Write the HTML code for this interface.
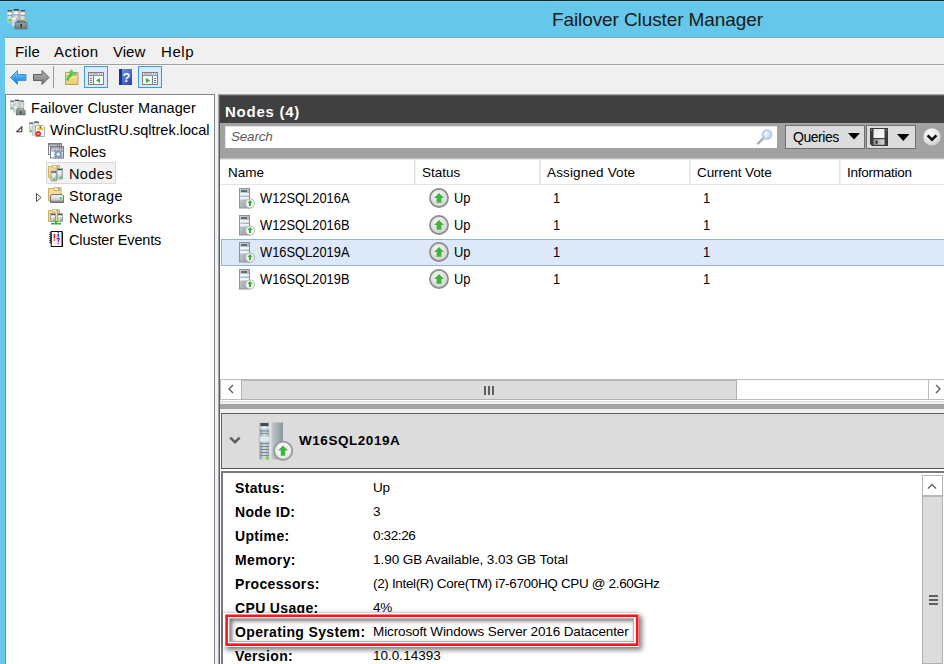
<!DOCTYPE html>
<html><head><meta charset="utf-8">
<style>
*{margin:0;padding:0;box-sizing:border-box}
html,body{width:944px;height:664px;overflow:hidden;background:#65c7e9;font-family:"Liberation Sans",sans-serif;color:#000}
.a{position:absolute}
svg{position:absolute;overflow:visible}
#topline{left:0;top:0;width:944px;height:1px;background:#2a2222;border-bottom:1px solid #64d2f4;height:2px}
#title{left:552px;top:9px;font-size:19px;color:#1a1a1a;white-space:nowrap;letter-spacing:-0.1px}
#client{left:5px;top:37px;width:939px;height:627px;background:#f0f0f0;border-top:1px solid #74a9c6}
#fr4{left:4px;top:37px;width:1px;height:627px;background:#60cdef}
#menuline{left:5px;top:64px;width:939px;height:1px;background:#a0a0a0}
#menuhl{left:5px;top:65px;width:939px;height:1px;background:#fafafc}
.menu{top:43px;font-size:15px;color:#000;white-space:nowrap}
#tree{left:5px;top:94px;width:210px;height:570px;background:#fff;border:1px solid #828790;border-bottom:none}
.t{font-size:14.5px;white-space:nowrap}
#rp{left:218px;top:94px;width:726px;height:570px;background:#5e5e5e;border-top:1px solid #a4a4a4;border-left:1px solid #a4a4a4}
#hdr{left:220px;top:96px;width:724px;height:27px;background:#404040}
#hdrtxt{left:225px;top:103px;font-size:15px;font-weight:bold;color:#fff;letter-spacing:0.75px}
#band{left:220px;top:123px;width:724px;height:37px;background:linear-gradient(#a2a2a2 0,#a2a2a2 35px,#d8d8d8 36px,#f4f4f4 37px)}
#search{left:225px;top:126px;width:552px;height:22px;background:#fff;border-top:1px solid #dfe3ec;border-left:1px solid #dfe3ec}
#stxt{left:231px;top:129px;font-size:13.5px;font-style:italic;color:#5c5c5c;letter-spacing:-0.2px}
.btn{top:125px;height:24px;background:#dcdcdc;border:1px solid #707070}
#list{left:220px;top:160px;width:724px;height:244px;background:#fff}
.ch{top:165px;font-size:13.5px;color:#000;white-space:nowrap}
.csep{top:160px;width:2px;height:24px;background:linear-gradient(90deg,#e0e0e0 0 1px,#efefef 1px 2px)}
.row{font-size:14px;white-space:nowrap;transform:scaleX(0.92);transform-origin:0 0}
#sel{left:221px;top:239px;width:730px;height:27px;background:#dde9f9;border:1px solid #8db2e3}
#hscroll{left:220px;top:379px;width:724px;height:21px;background:#fff;border-top:1px solid #bdbdbd;border-bottom:1px solid #bdbdbd}
#details{left:220px;top:413px;width:724px;height:251px;background:#fff}
#dhdr{left:221px;top:413px;width:723px;height:56px;background:#dcdcdc;border-top:1px solid #606060;border-left:1px solid #606060;border-bottom:1px solid #555}
#dcont{left:221px;top:471px;width:723px;height:193px;background:#fff;border-top:2px solid #767b86;border-left:2px solid #767b86}
.dl{left:235px;font-size:14px;font-weight:bold;white-space:nowrap;letter-spacing:0.35px}
.dv{left:373px;font-size:13.5px;white-space:nowrap;letter-spacing:-0.2px;margin-top:-1px}
</style></head><body>
<div class="a" id="topline"></div>
<div class="a" id="title">Failover Cluster Manager</div>
<!-- app icon -->
<svg style="left:7px;top:8px" width="21" height="22" viewBox="0 0 21 22">
 <defs><linearGradient id="tw" x1="0" y1="0" x2="1" y2="0"><stop offset="0" stop-color="#b8bec2"/><stop offset="0.5" stop-color="#e4e7e9"/><stop offset="1" stop-color="#a4abb0"/></linearGradient>
 <linearGradient id="tb" x1="0" y1="0" x2="0" y2="1"><stop offset="0" stop-color="#9aa3a8"/><stop offset="1" stop-color="#6d767b"/></linearGradient></defs>
 <rect x="0" y="2" width="5.5" height="12.5" fill="url(#tw)"/><rect x="0.5" y="2" width="4.5" height="1.5" fill="#44525a"/>
 <rect x="1.5" y="11" width="2.5" height="2.5" fill="#4ad23a"/>
 <rect x="5.8" y="1" width="7" height="12" fill="url(#tw)"/><rect x="6.5" y="1" width="5.5" height="1.6" fill="#2f3b42"/>
 <rect x="13" y="2" width="5.6" height="11" fill="url(#tw)"/><rect x="13.5" y="2" width="4.5" height="1.5" fill="#44525a"/>
 <rect x="8.5" y="10.5" width="2.5" height="2.5" fill="#b8e030"/><rect x="15.5" y="11" width="2.2" height="2" fill="#c8e040"/>
 <rect x="4.3" y="9.5" width="5.7" height="8.5" fill="url(#tw)"/><rect x="4.8" y="10" width="4.5" height="1.2" fill="#fff"/>
 <rect x="8" y="14.5" width="12" height="6.5" fill="url(#tb)" stroke="#5c646a" stroke-width="0.6"/>
 <path d="M10.5 14.5 V13 H17.5 V14.5" stroke="#4a555b" stroke-width="1" fill="none"/><rect x="0.5" y="5" width="4.5" height="1" fill="#fff"/><rect x="6.5" y="4.5" width="5.5" height="1" fill="#fff"/><rect x="13.5" y="5" width="4.5" height="1" fill="#fff"/><rect x="0.5" y="7" width="4.5" height="0.8" fill="#8a9398"/><rect x="6.5" y="6.5" width="5.5" height="0.8" fill="#8a9398"/><rect x="13.5" y="7" width="4.5" height="0.8" fill="#8a9398"/>
 <rect x="13.5" y="16" width="1.3" height="3.5" fill="#222"/>
</svg>
<div class="a" id="client"></div><div class="a" id="fr4"></div>
<div class="a menu" style="left:15px;letter-spacing:0.2px">File</div>
<div class="a menu" style="left:54px;letter-spacing:0.5px">Action</div>
<div class="a menu" style="left:113px">View</div>
<div class="a menu" style="left:161px;letter-spacing:0.6px">Help</div>
<div class="a" id="menuline"></div>
<div class="a" id="menuhl"></div>

<!-- toolbar -->
<svg style="left:10px;top:70px" width="17" height="15" viewBox="0 0 17 15">
 <defs><linearGradient id="gb" x1="0" y1="0" x2="0" y2="1"><stop offset="0" stop-color="#7fd0ff"/><stop offset="1" stop-color="#0a78d8"/></linearGradient></defs>
 <path d="M0.5 7.5 L7.5 0.5 L7.5 4.5 L16 4.5 L16 10.5 L7.5 10.5 L7.5 14.5 Z" fill="url(#gb)" stroke="#3f93d6" stroke-width="1"/>
</svg>
<svg style="left:33px;top:70px" width="17" height="15" viewBox="0 0 17 15">
 <defs><linearGradient id="gg" x1="0" y1="0" x2="0" y2="1"><stop offset="0" stop-color="#b8b8b8"/><stop offset="1" stop-color="#777"/></linearGradient></defs>
 <path d="M16 7.5 L9 0.5 L9 4.5 L0.5 4.5 L0.5 10.5 L9 10.5 L9 14.5 Z" fill="url(#gg)" stroke="#5e5e5e" stroke-width="1"/>
</svg>
<div class="a" style="left:53px;top:66px;width:1px;height:22px;background:#9a9a9a"></div>
<svg style="left:64px;top:69px" width="16" height="17" viewBox="0 0 16 17">
 <defs><linearGradient id="fo" x1="0" y1="0" x2="0" y2="1"><stop offset="0" stop-color="#fbe7a8"/><stop offset="1" stop-color="#ecca72"/></linearGradient></defs>
 <path d="M1.5 3.5 h12.5 v12 h-12.5 z" fill="url(#fo)" stroke="#c29f55"/>
 <path d="M1.5 6.5 h12.5" stroke="#dcb866" stroke-width="1"/>
 <ellipse cx="11.6" cy="4.7" rx="1.4" ry="0.7" fill="#4f8fe8"/>
 <path d="M3.6 10.4 C4.3 8.2 5.5 6.8 7.4 5.4" stroke="#3ccf3c" stroke-width="2.7" fill="none" stroke-linecap="round"/>
 <path d="M4.6 3.8 L7.6 0.8 L10.6 5.6 Z" fill="#52dc52" stroke="#3cc83c" stroke-width="0.8" stroke-linejoin="round"/>
</svg>
<div class="a" style="left:84px;top:66px;width:24px;height:22px;background:#dbe9f9;border:1px solid #3a9ae0"></div>
<svg style="left:88px;top:72px" width="16" height="13" viewBox="0 0 16 13">
 <rect x="0.5" y="0.5" width="15" height="12" fill="#fff" stroke="#7c7f86"/>
 <rect x="1" y="1" width="14" height="2" fill="#e4e4e4"/><rect x="2" y="1.5" width="8" height="1" fill="#9a9da3"/><rect x="11" y="1.5" width="1" height="1" fill="#7c7f86"/><rect x="13" y="1.5" width="1" height="1" fill="#7c7f86"/>
 <rect x="1" y="3" width="14" height="1" fill="#8e9197"/>
 <rect x="5" y="4" width="1" height="8" fill="#7c7f86"/>
 <rect x="1" y="4" width="4" height="8" fill="#eef0f3"/>
 <rect x="2" y="6" width="2" height="1" fill="#4a7ab8"/><rect x="2" y="8" width="2" height="1" fill="#4a7ab8"/><rect x="2" y="10" width="2" height="1" fill="#4a7ab8"/>
 <path d="M8 8.5 L12 6 L12 11 Z" fill="#2fb52f"/>
</svg>
<svg style="left:119px;top:69px" width="13" height="16" viewBox="0 0 13 16">
 <defs><linearGradient id="hb" x1="0" y1="0" x2="1" y2="1"><stop offset="0" stop-color="#7a9af0"/><stop offset="1" stop-color="#2840a8"/></linearGradient></defs>
 <rect x="0" y="0" width="13" height="16" fill="url(#hb)"/>
 <rect x="0" y="0" width="3" height="16" fill="#1c3490"/>
 <text x="7.6" y="12.5" font-family="Liberation Sans" font-weight="bold" font-size="13" fill="#fff" text-anchor="middle">?</text>
</svg>
<div class="a" style="left:138px;top:66px;width:24px;height:22px;background:#dbe9f9;border:1px solid #3a9ae0"></div>
<svg style="left:142px;top:72px" width="16" height="13" viewBox="0 0 16 13">
 <rect x="0.5" y="0.5" width="15" height="12" fill="#fff" stroke="#7c7f86"/>
 <rect x="1" y="1" width="14" height="2" fill="#e4e4e4"/><rect x="2" y="1.5" width="8" height="1" fill="#9a9da3"/><rect x="11" y="1.5" width="1" height="1" fill="#7c7f86"/><rect x="13" y="1.5" width="1" height="1" fill="#7c7f86"/>
 <rect x="1" y="3" width="14" height="1" fill="#8e9197"/>
 <rect x="10" y="4" width="1" height="8" fill="#7c7f86"/>
 <rect x="1" y="4" width="9" height="8" fill="#f4f5f6"/>
 <rect x="12" y="6" width="2" height="1" fill="#4a7ab8"/><rect x="12" y="8" width="2" height="1" fill="#4a7ab8"/><rect x="12" y="10" width="2" height="1" fill="#4a7ab8"/>
 <path d="M4 6 L8 8.5 L4 11 Z" fill="#2fb52f"/>
</svg>

<!-- tree -->
<div class="a" id="tree"></div>
<svg style="left:10px;top:99px" width="16" height="16" viewBox="0 0 21 21">
 <rect x="0" y="2" width="5.5" height="12.5" fill="url(#tw)"/><rect x="0.5" y="2" width="4.5" height="1.5" fill="#44525a"/>
 <rect x="0.5" y="5" width="4.5" height="1" fill="#fff"/><rect x="6.5" y="4.5" width="5.5" height="1" fill="#fff"/><rect x="13.5" y="5" width="4.5" height="1" fill="#fff"/>
 <rect x="1.5" y="11" width="2.5" height="2.5" fill="#4ad23a"/>
 <rect x="5.8" y="1" width="7" height="12" fill="url(#tw)"/><rect x="6.5" y="1" width="5.5" height="1.6" fill="#2f3b42"/>
 <rect x="13" y="2" width="5.6" height="11" fill="url(#tw)"/><rect x="13.5" y="2" width="4.5" height="1.5" fill="#44525a"/>
 <rect x="8.5" y="10.5" width="2.5" height="2.5" fill="#b8e030"/><rect x="15.5" y="11" width="2.2" height="2" fill="#c8e040"/>
 <rect x="4.3" y="9.5" width="5.7" height="8.5" fill="url(#tw)"/><rect x="4.8" y="10" width="4.5" height="1.2" fill="#fff"/>
 <rect x="8" y="14.5" width="12" height="6.5" fill="url(#tb)" stroke="#5c646a" stroke-width="0.6"/>
 <path d="M10.5 14.5 V13 H17.5 V14.5" stroke="#4a555b" stroke-width="1" fill="none"/>
 <rect x="13.5" y="16" width="1.3" height="3.5" fill="#222"/>
</svg>
<div class="a t" style="left:31px;top:100px;letter-spacing:0.09px">Failover Cluster Manager</div>
<svg style="left:16px;top:126px" width="7" height="7" viewBox="0 0 7 7"><path d="M5.8 0.8 L5.8 5.8 L0.8 5.8 Z" fill="#fff" stroke="#3a3a3a" stroke-width="1.1"/></svg>
<svg style="left:29px;top:121px" width="16" height="16" viewBox="0 0 16 16">
 <rect x="0" y="1.5" width="4.5" height="10.5" fill="url(#tw)"/><rect x="0.5" y="1.5" width="3.5" height="1.2" fill="#44525a"/><rect x="0.5" y="4" width="3.5" height="0.8" fill="#fff"/>
 <rect x="1.2" y="9" width="1.8" height="1.8" fill="#4ad23a"/>
 <rect x="4.8" y="0.5" width="5" height="11" fill="url(#tw)"/><rect x="5.2" y="0.5" width="4.2" height="1.2" fill="#2f3b42"/><rect x="5.2" y="3" width="4.2" height="0.8" fill="#fff"/>
 <rect x="3" y="6" width="4" height="9" fill="url(#tw)"/>
 <path d="M6.5 4.5 H14 L15.5 6 V15.5 H6.5 Z" fill="#fff" stroke="#a0a4a8" stroke-width="0.9"/>
 <path d="M11.3 4 L14 8.6 L8.6 8.6 Z" fill="#f5c800" stroke="#c49a00" stroke-width="0.5"/>
 <rect x="11" y="5.8" width="0.7" height="1.6" fill="#3a3000"/>
 <circle cx="9.3" cy="12.8" r="2.7" fill="#d8282a"/>
 <path d="M8.2 11.7 L10.4 13.9 M10.4 11.7 L8.2 13.9" stroke="#fff" stroke-width="0.7"/>
</svg>
<div class="a t" style="left:50px;top:122px">WinClustRU.sqltrek.local</div>
<svg style="left:48px;top:143px" width="16" height="16" viewBox="0 0 16 16">
 <rect x="0.5" y="0.5" width="13" height="11" fill="#fff" stroke="#7b8087"/>
 <rect x="1" y="1" width="12" height="2.2" fill="#7b8087"/><rect x="1.5" y="1.7" width="7.5" height="0.9" fill="#e8eaee"/><rect x="10" y="1.6" width="1" height="1" fill="#e8eaee"/><rect x="12" y="1.6" width="1" height="1" fill="#e8eaee"/>
 <rect x="2.5" y="3.5" width="13" height="11.5" fill="#fff" stroke="#7b8087"/>
 <rect x="3" y="4" width="12" height="2.2" fill="#7b8087"/><rect x="3.5" y="4.7" width="7.5" height="0.9" fill="#e8eaee"/><rect x="12" y="4.6" width="1" height="1" fill="#e8eaee"/><rect x="14" y="4.6" width="1" height="1" fill="#e8eaee"/>
 <rect x="3" y="6.2" width="12" height="1.6" fill="#b8bcc2"/><rect x="3" y="7.8" width="12" height="0.6" fill="#7b8087"/>
 <g transform="translate(10.3 11.3)">
  <rect x="-3.4" y="-3.4" width="6.8" height="6.8" rx="1.5" fill="#7d9cbc"/>
  <path d="M-3 -4.6 v1.4 M0 -4.6 v1.4 M3 -4.6 v1.4 M-3 3.2 v1.6 M0 3.2 v1.6 M3 3.2 v1.6 M-4.6 -2.5 h1.4 M-4.6 0 h1.4 M-4.6 2.5 h1.4 M3.2 -2.5 h1.4 M3.2 0 h1.4 M3.2 2.5 h1.4" stroke="#6f8eae" stroke-width="1.1"/>
  <path d="M0 -2 L2 0 L0 2 L-2 0 Z" fill="#fff"/>
 </g>
</svg>
<div class="a t" style="left:69px;top:144px;letter-spacing:0px">Roles</div>
<div class="a" style="left:46px;top:162px;width:70px;height:22px;background:#f2f2f2;border:1px solid #dadada"></div>
<svg style="left:48px;top:165px" width="16" height="16" viewBox="0 0 16 16">
 <path d="M0.5 1.5 h11 v11 h-11 z" fill="#f6dc94" stroke="#cfae62"/><path d="M4.5 0.5 h7 v2.6 h-7 z" fill="#fbeaba" stroke="#cfae62" stroke-width="0.8"/><rect x="8.3" y="1.2" width="2.2" height="1.1" rx="0.5" fill="#3f8ae8"/>
 <rect x="9" y="3.5" width="5.5" height="10.5" fill="url(#tw)" stroke="#8a9398" stroke-width="0.7"/>
 <rect x="9.5" y="4" width="4.5" height="1.2" fill="#44525a"/><rect x="9.5" y="6" width="4.5" height="1" fill="#fff"/><rect x="9.5" y="8" width="4.5" height="0.8" fill="#fff"/>
 <rect x="3" y="6" width="5.5" height="10" fill="url(#tw)" stroke="#8a9398" stroke-width="0.7"/>
 <rect x="3.5" y="6.5" width="4.5" height="1.2" fill="#44525a"/><rect x="3.5" y="8.5" width="4.5" height="1" fill="#fff"/><rect x="3.5" y="10.5" width="4.5" height="0.8" fill="#fff"/>
 <rect x="5" y="13.5" width="2" height="2" fill="#3dc63d"/><rect x="11.5" y="11.5" width="2" height="2" fill="#3dc63d"/>
</svg>
<div class="a t" style="left:69px;top:166px;letter-spacing:0.4px">Nodes</div>
<svg style="left:36px;top:193px" width="6" height="9" viewBox="0 0 6 9"><path d="M0.5 0.5 L5 4.5 L0.5 8.5 Z" fill="#fff" stroke="#555"/></svg>
<svg style="left:48px;top:187px" width="16" height="16" viewBox="0 0 16 16">
 <defs><linearGradient id="dr" x1="0" y1="0" x2="0" y2="1"><stop offset="0" stop-color="#f4f4f8"/><stop offset="0.6" stop-color="#d4d6dc"/><stop offset="1" stop-color="#6a6e74"/></linearGradient></defs>
 <path d="M0.5 1.5 h12.5 v12.5 h-12.5 z" fill="#f6dc94" stroke="#cfae62"/>
 <path d="M6 0.5 h7 v3 h-7 z" fill="#fbeaba" stroke="#cfae62" stroke-width="0.8"/>
 <rect x="9.8" y="1.3" width="2.2" height="1.1" rx="0.5" fill="#3f8ae8"/>
 <path d="M2.5 8.8 Q3 7.5 5 7.5 H13 Q15 7.5 15.5 9 V15.5 H2.5 Z" fill="url(#dr)" stroke="#62666c" stroke-width="0.9"/>
 <rect x="12" y="10" width="1.6" height="2.6" fill="#2ed02e"/>
</svg>
<div class="a t" style="left:69px;top:188px;letter-spacing:0.45px">Storage</div>
<svg style="left:48px;top:209px" width="16" height="16" viewBox="0 0 16 16">
 <path d="M0.5 1.5 h11 v11 h-11 z" fill="#f6dc94" stroke="#cfae62"/><path d="M4.5 0.5 h7 v2.6 h-7 z" fill="#fbeaba" stroke="#cfae62" stroke-width="0.8"/><rect x="8.3" y="1.2" width="2.2" height="1.1" rx="0.5" fill="#3f8ae8"/>
 <rect x="2.5" y="4.5" width="5" height="8" fill="url(#tw)" stroke="#8a9398" stroke-width="0.7"/>
 <rect x="9.5" y="4.5" width="5" height="8" fill="url(#tw)" stroke="#8a9398" stroke-width="0.7"/>
 <rect x="3" y="5" width="4" height="1" fill="#44525a"/><rect x="10" y="5" width="4" height="1" fill="#44525a"/>
 <rect x="3" y="7" width="4" height="1" fill="#fff"/><rect x="10" y="7" width="4" height="1" fill="#fff"/>
 <rect x="5" y="10.5" width="1.6" height="1.6" fill="#3dc63d"/><rect x="12" y="10.5" width="1.6" height="1.6" fill="#3dc63d"/>
 <rect x="7" y="12" width="2" height="3" fill="#2fb52f"/><rect x="3" y="14" width="10" height="1.5" fill="#2fb52f"/>
</svg>
<div class="a t" style="left:69px;top:210px;letter-spacing:0.4px">Networks</div>
<svg style="left:49px;top:231px" width="15" height="16" viewBox="0 0 15 16">
 <rect x="2.2" y="0.5" width="11" height="15" fill="#fff" stroke="#111" stroke-width="1"/>
 <rect x="12.7" y="1" width="1.3" height="15" fill="#111"/><rect x="2.5" y="15" width="11.5" height="1" fill="#111"/>
 <path d="M0.5 1.5 L2.5 2.5 L0.5 3.5 L2.5 4.5 L0.5 5.5 L2.5 6.5 L0.5 7.5 L2.5 8.5 L0.5 9.5 L2.5 10.5 L0.5 11.5 L2.5 12.5" stroke="#111" stroke-width="0.9" fill="none"/>
 <path d="M4.5 4 h8 M4.5 6 h8 M4.5 8 h8 M4.5 10 h8 M4.5 12 h8" stroke="#c9d2d6" stroke-width="0.7"/>
 <rect x="4.6" y="2.8" width="1.5" height="4.6" rx="0.7" fill="#f01010"/><rect x="4.7" y="8.4" width="1.3" height="1.3" fill="#f01010"/>
 <rect x="8.6" y="0.8" width="1.2" height="1.2" fill="#1030f0"/><rect x="8.6" y="2.6" width="1.3" height="3.8" fill="#1030f0"/>
 <path d="M7.7 8.2 Q8.8 6.8 10 7.6 Q10.8 8.6 9.3 9.8 V11" stroke="#8a10a0" stroke-width="1.2" fill="none"/>
 <rect x="8.7" y="12.2" width="1.2" height="1.2" fill="#8a10a0"/>
</svg>
<div class="a t" style="left:69px;top:232px;letter-spacing:-0.15px">Cluster Events</div>

<!-- right pane -->
<div class="a" id="rp"></div>
<div class="a" id="hdr"></div>
<div class="a" id="hdrtxt">Nodes (4)</div>
<div class="a" id="band"></div>
<div class="a" id="search"></div>
<div class="a" id="stxt">Search</div>
<svg style="left:756px;top:128px" width="18" height="18" viewBox="0 0 18 18">
 <defs><radialGradient id="mg" cx="0.4" cy="0.4" r="0.6"><stop offset="0" stop-color="#f4f9ff"/><stop offset="1" stop-color="#b8d4ee"/></radialGradient></defs>
 <path d="M2 15.5 L7.5 10" stroke="#a8acb0" stroke-width="2.4" stroke-linecap="round"/>
 <circle cx="11" cy="6.5" r="4.6" fill="url(#mg)" stroke="#a9c3dc" stroke-width="1.2"/>
</svg>
<div class="a btn" style="left:785px;width:80px"></div>
<div class="a" style="left:793px;top:129px;font-size:14px;letter-spacing:-0.45px;white-space:nowrap">Queries</div>
<svg style="left:848px;top:133px" width="12" height="7" viewBox="0 0 12 7"><path d="M0 0 H12 L6 6.5 Z" fill="#000"/></svg>
<div class="a btn" style="left:866px;width:50px"></div>
<svg style="left:870px;top:128px" width="18" height="18" viewBox="0 0 18 18">
 <defs><linearGradient id="fl" x1="0" y1="0" x2="1" y2="1"><stop offset="0" stop-color="#e8e8e8"/><stop offset="1" stop-color="#fafafa"/></linearGradient>
 <linearGradient id="fs" x1="0" y1="0" x2="1" y2="0"><stop offset="0" stop-color="#9a9a9a"/><stop offset="1" stop-color="#d8d8d8"/></linearGradient></defs>
 <path d="M0 0 H18 V18 H2 L0 16 Z" fill="#3a3a3a"/>
 <rect x="3.5" y="1" width="11" height="9" fill="url(#fl)"/>
 <rect x="3.5" y="11.2" width="11" height="5.6" fill="url(#fs)"/>
 <rect x="5.5" y="12.5" width="2" height="3.2" fill="#2a2a2a"/>
 <rect x="1" y="1.5" width="1" height="1.2" fill="#aaa"/><rect x="16" y="1.5" width="1" height="1.2" fill="#aaa"/>
</svg>
<svg style="left:897px;top:134px" width="13" height="7" viewBox="0 0 13 7"><path d="M0 0 H12.5 L6.25 7 Z" fill="#000"/></svg>
<svg style="left:922px;top:127px" width="20" height="20" viewBox="0 0 20 20">
 <defs><radialGradient id="cg" cx="0.4" cy="0.3" r="0.75"><stop offset="0" stop-color="#fbfbfb"/><stop offset="0.7" stop-color="#dedede"/><stop offset="1" stop-color="#b8b8b8"/></radialGradient></defs>
 <circle cx="10" cy="10" r="9.2" fill="url(#cg)" stroke="#9c9c9c" stroke-width="0.8"/>
 <path d="M5.6 8.4 L10 12.6 L14.4 8.4" stroke="#111" stroke-width="2.6" fill="none"/>
</svg>

<div class="a" id="list"></div>
<div class="a ch" style="left:228px">Name</div>
<div class="a ch" style="left:422px">Status</div>
<div class="a ch" style="left:547px;letter-spacing:0.15px">Assigned Vote</div>
<div class="a ch" style="left:697px;letter-spacing:-0.1px">Current Vote</div>
<div class="a ch" style="left:847px;letter-spacing:-0.25px">Information</div>
<div class="a csep" style="left:414px"></div>
<div class="a csep" style="left:539px"></div>
<div class="a csep" style="left:689px"></div>
<div class="a csep" style="left:839px"></div>
<div class="a" style="left:220px;top:184px;width:724px;height:1px;background:#e3e3e3"></div>
<div class="a" id="sel"></div>

<svg style="left:239px;top:188px" width="16" height="21" viewBox="0 0 16 21">
 <defs><linearGradient id="srvg" x1="0" y1="0" x2="1" y2="1"><stop offset="0" stop-color="#d2dadd"/><stop offset="1" stop-color="#8e999f"/></linearGradient></defs>
 <rect x="0.5" y="0.5" width="10" height="19.5" fill="url(#srvg)" stroke="#8b969c"/>
 <rect x="2" y="2" width="6" height="2" fill="#5f6e76"/>
 <rect x="1" y="5" width="9" height="2.5" fill="#eef3f5"/><rect x="1" y="9" width="9" height="2.5" fill="#eef3f5"/>
 <circle cx="11" cy="15.5" r="4.6" fill="#f4f4f4" stroke="#a8a8a8" stroke-width="0.9"/>
 <path d="M11 12 L13.6 15 L12 15 L12 18 L10 18 L10 15 L8.4 15 Z" fill="#2fb52f"/>
</svg>
<div class="a row" style="left:260px;top:190px">W12SQL2016A</div>
<svg style="left:429px;top:188px" width="20" height="20" viewBox="0 0 20 20">
 <defs><radialGradient id="uc0" cx="0.45" cy="0.4" r="0.6"><stop offset="0" stop-color="#ffffff"/><stop offset="1" stop-color="#cdcdcd"/></radialGradient></defs>
 <circle cx="10" cy="10" r="9.1" fill="url(#uc0)" stroke="#8a8a8a" stroke-width="1.6"/>
 <path d="M10 5 L15 10 L12.4 10 L12.4 14.8 L7.6 14.8 L7.6 10 L5 10 Z" fill="#3cb53c"/>
</svg>
<div class="a row" style="left:454px;top:190px">Up</div>
<div class="a row" style="left:553px;top:190px">1</div>
<div class="a row" style="left:703px;top:190px">1</div>
<svg style="left:239px;top:215px" width="16" height="21" viewBox="0 0 16 21">
 <rect x="0.5" y="0.5" width="10" height="19.5" fill="url(#srvg)" stroke="#8b969c"/>
 <rect x="2" y="2" width="6" height="2" fill="#5f6e76"/>
 <rect x="1" y="5" width="9" height="2.5" fill="#eef3f5"/><rect x="1" y="9" width="9" height="2.5" fill="#eef3f5"/>
 <circle cx="11" cy="15.5" r="4.6" fill="#f4f4f4" stroke="#a8a8a8" stroke-width="0.9"/>
 <path d="M11 12 L13.6 15 L12 15 L12 18 L10 18 L10 15 L8.4 15 Z" fill="#2fb52f"/>
</svg>
<div class="a row" style="left:260px;top:217px">W12SQL2016B</div>
<svg style="left:429px;top:215px" width="20" height="20" viewBox="0 0 20 20">
 <defs><radialGradient id="uc1" cx="0.45" cy="0.4" r="0.6"><stop offset="0" stop-color="#ffffff"/><stop offset="1" stop-color="#cdcdcd"/></radialGradient></defs>
 <circle cx="10" cy="10" r="9.1" fill="url(#uc1)" stroke="#8a8a8a" stroke-width="1.6"/>
 <path d="M10 5 L15 10 L12.4 10 L12.4 14.8 L7.6 14.8 L7.6 10 L5 10 Z" fill="#3cb53c"/>
</svg>
<div class="a row" style="left:454px;top:217px">Up</div>
<div class="a row" style="left:553px;top:217px">1</div>
<div class="a row" style="left:703px;top:217px">1</div>
<svg style="left:239px;top:242px" width="16" height="21" viewBox="0 0 16 21">
 <rect x="0.5" y="0.5" width="10" height="19.5" fill="url(#srvg)" stroke="#8b969c"/>
 <rect x="2" y="2" width="6" height="2" fill="#5f6e76"/>
 <rect x="1" y="5" width="9" height="2.5" fill="#eef3f5"/><rect x="1" y="9" width="9" height="2.5" fill="#eef3f5"/>
 <circle cx="11" cy="15.5" r="4.6" fill="#f4f4f4" stroke="#a8a8a8" stroke-width="0.9"/>
 <path d="M11 12 L13.6 15 L12 15 L12 18 L10 18 L10 15 L8.4 15 Z" fill="#2fb52f"/>
</svg>
<div class="a row" style="left:260px;top:244px">W16SQL2019A</div>
<svg style="left:429px;top:242px" width="20" height="20" viewBox="0 0 20 20">
 <defs><radialGradient id="uc2" cx="0.45" cy="0.4" r="0.6"><stop offset="0" stop-color="#ffffff"/><stop offset="1" stop-color="#cdcdcd"/></radialGradient></defs>
 <circle cx="10" cy="10" r="9.1" fill="url(#uc2)" stroke="#8a8a8a" stroke-width="1.6"/>
 <path d="M10 5 L15 10 L12.4 10 L12.4 14.8 L7.6 14.8 L7.6 10 L5 10 Z" fill="#3cb53c"/>
</svg>
<div class="a row" style="left:454px;top:244px">Up</div>
<div class="a row" style="left:553px;top:244px">1</div>
<div class="a row" style="left:703px;top:244px">1</div>
<svg style="left:239px;top:269px" width="16" height="21" viewBox="0 0 16 21">
 <rect x="0.5" y="0.5" width="10" height="19.5" fill="url(#srvg)" stroke="#8b969c"/>
 <rect x="2" y="2" width="6" height="2" fill="#5f6e76"/>
 <rect x="1" y="5" width="9" height="2.5" fill="#eef3f5"/><rect x="1" y="9" width="9" height="2.5" fill="#eef3f5"/>
 <circle cx="11" cy="15.5" r="4.6" fill="#f4f4f4" stroke="#a8a8a8" stroke-width="0.9"/>
 <path d="M11 12 L13.6 15 L12 15 L12 18 L10 18 L10 15 L8.4 15 Z" fill="#2fb52f"/>
</svg>
<div class="a row" style="left:260px;top:271px">W16SQL2019B</div>
<svg style="left:429px;top:269px" width="20" height="20" viewBox="0 0 20 20">
 <defs><radialGradient id="uc3" cx="0.45" cy="0.4" r="0.6"><stop offset="0" stop-color="#ffffff"/><stop offset="1" stop-color="#cdcdcd"/></radialGradient></defs>
 <circle cx="10" cy="10" r="9.1" fill="url(#uc3)" stroke="#8a8a8a" stroke-width="1.6"/>
 <path d="M10 5 L15 10 L12.4 10 L12.4 14.8 L7.6 14.8 L7.6 10 L5 10 Z" fill="#3cb53c"/>
</svg>
<div class="a row" style="left:454px;top:271px">Up</div>
<div class="a row" style="left:553px;top:271px">1</div>
<div class="a row" style="left:703px;top:271px">1</div>

<!-- horizontal scrollbar -->
<div class="a" id="hscroll"></div>
<div class="a" style="left:220px;top:380px;width:1px;height:19px;background:#bdbdbd"></div>
<svg style="left:227px;top:384px" width="8" height="10" viewBox="0 0 8 10"><path d="M6 1 L2 5 L6 9" stroke="#606060" stroke-width="1.4" fill="none"/></svg>
<div class="a" style="left:241px;top:379px;width:496px;height:21px;background:#dcdcdc;border:1px solid #b0b0b0;border-top:2px solid #b8b8b8"></div>
<div class="a" style="left:484px;top:386px;width:2px;height:9px;background:#606060"></div>
<div class="a" style="left:488px;top:386px;width:2px;height:9px;background:#606060"></div>
<div class="a" style="left:492px;top:386px;width:2px;height:9px;background:#606060"></div>
<div class="a" style="left:928px;top:380px;width:1px;height:19px;background:#bdbdbd"></div>
<svg style="left:934px;top:384px" width="8" height="10" viewBox="0 0 8 10"><path d="M2 1 L6 5 L2 9" stroke="#606060" stroke-width="1.4" fill="none"/></svg>

<div class="a" style="left:220px;top:400px;width:724px;height:13px;background:linear-gradient(#fff 0,#fff 1px,#dcdcdc 1px,#dcdcdc 2px,#efefef 2px,#efefef 4px,#a3a3a3 4px,#a3a3a3 9px,#f0f0f0 9px)"></div>
<div class="a" id="details"></div>
<div class="a" id="dhdr"></div>
<svg style="left:229px;top:436px" width="13" height="9" viewBox="0 0 13 9"><path d="M1.3 1.6 L6 6.2 L10.7 1.6" stroke="#606060" stroke-width="2.5" fill="none"/></svg>
<svg style="left:259px;top:422px" width="36" height="40" viewBox="0 0 36 40">
 <defs>
  <linearGradient id="sf" x1="0" y1="0" x2="1" y2="0"><stop offset="0" stop-color="#8e9ca4"/><stop offset="0.45" stop-color="#d4dee3"/><stop offset="1" stop-color="#a4b1b8"/></linearGradient>
  <linearGradient id="ss" x1="0" y1="0" x2="1" y2="0"><stop offset="0" stop-color="#eef1f2"/><stop offset="0.25" stop-color="#b9c1c5"/><stop offset="1" stop-color="#8c979d"/></linearGradient>
  <radialGradient id="bg2" cx="0.45" cy="0.4" r="0.65"><stop offset="0" stop-color="#ffffff"/><stop offset="0.7" stop-color="#ececec"/><stop offset="1" stop-color="#c8c8c8"/></radialGradient>
 </defs>
 <rect x="0.5" y="0.5" width="10" height="37" fill="url(#sf)"/>
 <rect x="10.5" y="0.5" width="13.5" height="37" fill="url(#ss)"/>
 <rect x="1.5" y="1" width="8" height="3" rx="1" fill="#3d4b53"/>
 <rect x="1" y="5" width="9" height="1.5" fill="#e6eef2"/>
 <rect x="1" y="8.5" width="9" height="1" fill="#7a878e"/><rect x="1" y="11" width="9" height="1" fill="#8a969c"/>
 <rect x="1" y="14.5" width="9" height="5" fill="#dfe9ee"/>
 <rect x="1" y="21" width="9" height="1" fill="#7a878e"/><rect x="1" y="24" width="9" height="1" fill="#7a878e"/><rect x="1" y="27" width="9" height="1" fill="#7a878e"/><rect x="1" y="30" width="9" height="1" fill="#7a878e"/><rect x="1" y="33" width="9" height="1" fill="#7a878e"/>
 <rect x="7" y="34.5" width="3" height="3" rx="1" fill="#6ed83c"/>
 <circle cx="24.2" cy="28.8" r="9.1" fill="url(#bg2)" stroke="#9a9a9a" stroke-width="1.8"/>
 <path d="M24 23.5 L29 28.6 L26.2 28.6 L26.2 33.8 L21.8 33.8 L21.8 28.6 L19 28.6 Z" fill="#3cb53c"/>
</svg>
<div class="a" style="left:299px;top:433px;font-size:13.5px;font-weight:bold;letter-spacing:0.55px;white-space:nowrap">W16SQL2019A</div>

<div class="a" id="dcont"></div>
<!-- v scrollbar -->
<div class="a" style="left:922px;top:475px;width:21px;height:21px;background:#fff;border:1px solid #b4b4b4"></div>
<svg style="left:927px;top:482px" width="10" height="8" viewBox="0 0 10 8"><path d="M1 6.5 L5 2.5 L9 6.5" stroke="#606060" stroke-width="1.4" fill="none"/></svg>
<div class="a" style="left:922px;top:495px;width:21px;height:169px;background:#dcdcdc;border:1px solid #b0b0b0;border-top:2px solid #b8b8b8"></div>
<div class="a" style="left:929px;top:595px;width:9px;height:2px;background:#606060"></div>
<div class="a" style="left:929px;top:599px;width:9px;height:2px;background:#606060"></div>
<div class="a" style="left:929px;top:603px;width:9px;height:2px;background:#606060"></div>

<div class="a dl" style="top:480px">Status:</div><div class="a dv" style="top:481px">Up</div>
<div class="a dl" style="top:504px">Node ID:</div><div class="a dv" style="top:505px">3</div>
<div class="a dl" style="top:528px">Uptime:</div><div class="a dv" style="top:529px;letter-spacing:-0.37px">0:32:26</div>
<div class="a dl" style="top:552px">Memory:</div><div class="a dv" style="top:553px;letter-spacing:-0.04px">1.90 GB Available, 3.03 GB Total</div>
<div class="a dl" style="top:576px">Processors:</div><div class="a dv" style="top:577px;letter-spacing:-0.34px">(2) Intel(R) Core(TM) i7-6700HQ CPU @ 2.60GHz</div>
<div class="a dl" style="top:600px">CPU Usage:</div><div class="a dv" style="top:601px">4%</div>
<div class="a" style="left:223px;top:613px;width:416px;height:34px;background:#fff;box-shadow:3px 3px 5px rgba(0,0,0,0.5),-1px -1px 3px rgba(0,0,0,0.18)"></div>
<svg style="left:223px;top:612px" width="418" height="36" viewBox="0 0 418 36"><rect x="3.6" y="3.8" width="410.6" height="28.9" fill="#fff" stroke="#f3161d" stroke-width="2.6"/></svg>
<div class="a" style="left:229px;top:618px;width:405px;height:24px;border:1px solid #b4b4b4;background:#fff;box-shadow:inset 2px 2px 4px rgba(0,0,0,0.55)"></div>
<div class="a dl" style="top:624px">Operating System:</div><div class="a dv" style="top:625px;letter-spacing:-0.12px">Microsoft Windows Server 2016 Datacenter</div>
<div class="a dl" style="top:648px">Version:</div><div class="a dv" style="top:649px;letter-spacing:0.02px">10.0.14393</div>
</body></html>
